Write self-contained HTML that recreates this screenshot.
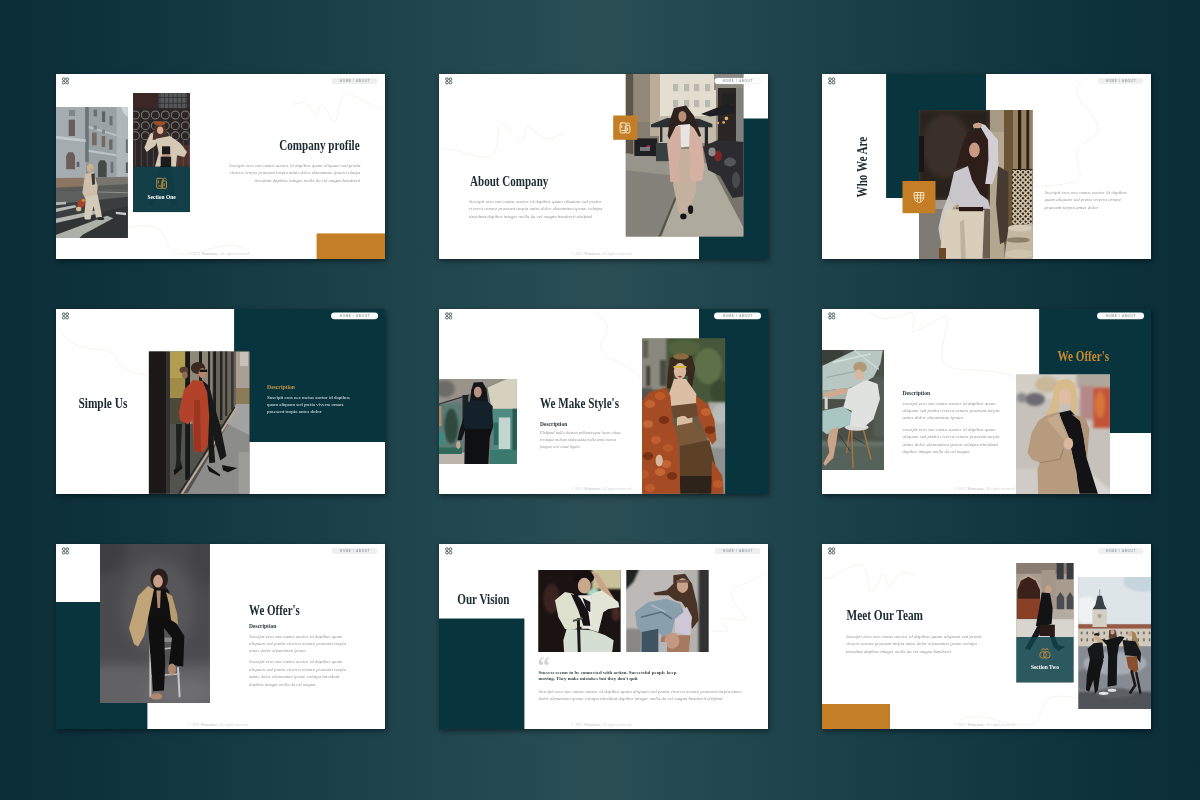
<!DOCTYPE html><html lang="en"><head><meta charset="utf-8"><title>Wonsnow – Company profile presentation</title><style>
html,body{margin:0;padding:0}
body{width:1200px;height:800px;overflow:hidden;position:relative;background:linear-gradient(90deg,#0b2d38 0%,#0e323c 8%,#193e47 25%,#23484f 40%,#2b4e55 50%,#21464d 62%,#163b44 78%,#0d313b 93%,#0b2d38 100%);font-family:"Liberation Serif",serif}
.slide{will-change:transform;position:absolute;width:329.0px;height:185.0px;box-shadow:1px 2px 5px rgba(0,10,14,.55);overflow:hidden;background:#fff}
.slide svg{display:block;width:100%;height:100%;font-family:"Liberation Serif",serif}
</style></head><body>
<svg width="0" height="0" style="position:absolute"><defs><filter id="z2" x="-30%" y="-30%" width="160%" height="160%" color-interpolation-filters="sRGB"><feGaussianBlur stdDeviation="2"/></filter><filter id="z3" x="-30%" y="-30%" width="160%" height="160%" color-interpolation-filters="sRGB"><feGaussianBlur stdDeviation="3"/></filter><filter id="z4" x="-30%" y="-30%" width="160%" height="160%" color-interpolation-filters="sRGB"><feGaussianBlur stdDeviation="4"/></filter><filter id="z6" x="-30%" y="-30%" width="160%" height="160%" color-interpolation-filters="sRGB"><feGaussianBlur stdDeviation="6"/></filter><filter id="z9" x="-30%" y="-30%" width="160%" height="160%" color-interpolation-filters="sRGB"><feGaussianBlur stdDeviation="9"/></filter><filter id="z14" x="-30%" y="-30%" width="160%" height="160%" color-interpolation-filters="sRGB"><feGaussianBlur stdDeviation="14"/></filter><filter id="z30" x="-30%" y="-30%" width="160%" height="160%" color-interpolation-filters="sRGB"><feGaussianBlur stdDeviation="30"/></filter></defs></svg>
<section class="slide" style="left:56px;top:74px"><svg viewBox="56 74 329 185" preserveAspectRatio="none"><rect x="56.0" y="74.0" width="329.0" height="185.0" fill="#fff" /><path d="M292.7 104.3 C294.4 104.0 300.2 102.3 302.7 102.3 C305.2 102.3 305.5 102.1 307.7 104.3 C309.9 106.5 314.1 114.6 316.0 115.2 C317.9 115.8 318.3 109.6 319.3 107.7 C320.3 105.8 320.7 103.6 321.8 103.9 C322.9 104.2 323.9 106.2 326.0 109.3 C328.1 112.4 332.4 121.6 334.3 122.3 C336.2 123.0 336.3 117.8 337.7 113.5 C339.1 109.2 341.0 100.0 342.7 96.8 C344.4 93.6 344.6 93.9 347.7 94.3 C350.8 94.7 356.7 97.3 361.0 99.3 C365.3 101.3 370.0 104.9 373.5 106.4 C377.0 107.9 380.4 107.8 381.8 108.1" fill="none" stroke="#f2eee5" stroke-width="0.7" stroke-linecap="round"/><path d="M128.1 227.5 C130.9 227.2 140.1 225.5 145.0 225.6 C149.9 225.7 154.4 226.3 157.5 228.1 C160.6 229.9 161.7 233.1 163.8 236.3 C165.9 239.5 167.7 244.6 170.0 247.5 C172.3 250.4 174.6 252.7 177.5 253.8 C180.4 255.0 182.5 255.1 187.5 254.4 C192.5 253.7 201.0 250.9 207.5 249.4 C214.0 247.9 221.1 246.1 226.3 245.6 C231.5 245.1 235.3 245.4 238.8 246.3 C242.3 247.2 245.5 249.9 247.5 251.3 C249.5 252.8 250.1 254.4 250.6 255.0" fill="none" stroke="#f2eee5" stroke-width="0.7" stroke-linecap="round"/><clipPath id="c1"><rect x="55.6" y="107.1" width="72.3" height="130.8"/></clipPath><g clip-path="url(#c1)"><rect x="54.6" y="106.1" width="74.3" height="132.8" fill="#8f949a"/><g transform="translate(50 106) scale(0.16667)"><g filter="url(#z3)"><rect x="30" y="0" width="186" height="440" fill="#a4acaf"/><rect x="230" y="0" width="172" height="440" fill="#99a2a5"/><rect x="400" y="0" width="70" height="440" fill="#adb6b8"/><rect x="211" y="0" width="22" height="335" fill="#6c7578"/><polygon points="425,0 470,0 470,70 440,40" fill="#cfd6d8"/><polygon points="30,178 214,200 214,216 30,196" fill="#c2c9cb"/><polygon points="232,120 400,170 400,182 232,134" fill="#b9c1c4"/><polygon points="232,262 400,290 400,302 232,276" fill="#bcc4c6"/><rect x="112" y="82" width="38" height="98" fill="#675f5b"/><rect x="114" y="24" width="36" height="36" fill="#7e8588"/><polygon points="97,300 110,278 138,278 150,300 150,380 97,380" fill="#6b5d57"/><rect x="262" y="22" width="20" height="40" fill="#697074"/><rect x="312" y="32" width="19" height="64" fill="#5c6366"/><rect x="357" y="60" width="18" height="56" fill="#687073"/><rect x="252" y="160" width="28" height="76" fill="#7a6963"/><rect x="310" y="180" width="21" height="66" fill="#786863"/><rect x="355" y="200" width="20" height="62" fill="#6e6967"/><rect x="262" y="116" width="19" height="26" fill="#7c8487"/><rect x="312" y="143" width="18" height="23" fill="#7c8487"/><polygon points="288,345 300,325 328,325 340,345 340,428 288,428" fill="#474948"/><rect x="364" y="335" width="16" height="67" fill="#6a7174"/><rect x="455" y="338" width="15" height="64" fill="#575e61"/><rect x="455" y="200" width="15" height="82" fill="#6d7477"/><rect x="160" y="335" width="16" height="30" fill="#59606a"/></g><g filter="url(#z3)"><polygon points="30,432 200,430 200,486 30,494" fill="#8b7661"/><polygon points="200,430 470,425 470,470 200,486" fill="#78756f"/><polygon points="30,490 470,468 470,497 30,518" fill="#5b5c58"/><polygon points="30,512 470,492 470,800 30,800" fill="#3a3e3e"/><polygon points="30,512 470,492 470,545 30,590" fill="#5c605f"/><polygon points="30,700 470,600 470,800 30,800" fill="#303434"/></g><g filter="url(#z3)"><polygon points="30,578 96,574 97,590 30,596" fill="#b4b7b1"/><polygon points="30,616 150,594 160,608 30,638" fill="#b7bab4"/><polygon points="30,676 292,622 310,640 30,704" fill="#b2b5af"/><polygon points="30,776 342,658 380,674 196,772 170,800 30,800" fill="#adb0a9"/><polygon points="395,634 456,640 456,655 395,648" fill="#c9ccc6"/><polyline points="292,516 470,521" fill="none" stroke="#8e918d" stroke-width="6" stroke-linecap="round" stroke-linejoin="round"/></g><g filter="url(#z3)"><ellipse cx="242" cy="372" rx="20" ry="25" fill="#c6b18c"/><ellipse cx="249" cy="384" rx="9" ry="11" fill="#c59f85"/><polygon points="210,410 262,394 286,480 282,542 214,560 194,520" fill="#cdbfa9"/><polygon points="248,408 268,404 270,470 254,474" fill="#3a3532"/><polygon points="214,545 285,530 300,600 312,666 276,670 262,600 246,666 204,668 211,600" fill="#d3cab8"/><ellipse cx="226" cy="673" rx="20" ry="8" fill="#d6d0c3"/><ellipse cx="304" cy="676" rx="22" ry="8" fill="#292927"/><ellipse cx="188" cy="584" rx="22" ry="30" fill="#a5442c" transform="rotate(30 188 584)"/><ellipse cx="172" cy="618" rx="16" ry="14" fill="#d2bd9a"/><ellipse cx="200" cy="566" rx="10" ry="10" fill="#c98a3a"/></g></g></g><clipPath id="c2"><rect x="133.2" y="93.0" width="56.8" height="119.1"/></clipPath><g clip-path="url(#c2)"><rect x="132.2" y="92.0" width="58.8" height="121.1" fill="#2b2324"/><g transform="translate(60 90) scale(0.16667)"><g filter="url(#z3)"><rect x="430" y="10" width="360" height="730" fill="#2b2324"/><rect x="430" y="10" width="162" height="102" fill="#3b2726"/><rect x="592" y="10" width="172" height="102" fill="#55575a"/><rect x="764" y="10" width="26" height="102" fill="#3a2a29"/><rect x="430" y="110" width="360" height="190" fill="#2c2524"/><circle cx="452" cy="150" r="24" fill="none" stroke="#7b7b7c" stroke-width="6"/><circle cx="452" cy="214" r="24" fill="none" stroke="#7b7b7c" stroke-width="6"/><circle cx="452" cy="274" r="24" fill="none" stroke="#7b7b7c" stroke-width="6"/><circle cx="512" cy="150" r="24" fill="none" stroke="#7b7b7c" stroke-width="6"/><circle cx="512" cy="214" r="24" fill="none" stroke="#7b7b7c" stroke-width="6"/><circle cx="512" cy="274" r="24" fill="none" stroke="#7b7b7c" stroke-width="6"/><circle cx="572" cy="150" r="24" fill="none" stroke="#7b7b7c" stroke-width="6"/><circle cx="572" cy="214" r="24" fill="none" stroke="#7b7b7c" stroke-width="6"/><circle cx="572" cy="274" r="24" fill="none" stroke="#7b7b7c" stroke-width="6"/><circle cx="632" cy="150" r="24" fill="none" stroke="#7b7b7c" stroke-width="6"/><circle cx="632" cy="214" r="24" fill="none" stroke="#7b7b7c" stroke-width="6"/><circle cx="632" cy="274" r="24" fill="none" stroke="#7b7b7c" stroke-width="6"/><circle cx="692" cy="150" r="24" fill="none" stroke="#7b7b7c" stroke-width="6"/><circle cx="692" cy="214" r="24" fill="none" stroke="#7b7b7c" stroke-width="6"/><circle cx="692" cy="274" r="24" fill="none" stroke="#7b7b7c" stroke-width="6"/><circle cx="752" cy="150" r="24" fill="none" stroke="#7b7b7c" stroke-width="6"/><circle cx="752" cy="214" r="24" fill="none" stroke="#7b7b7c" stroke-width="6"/><circle cx="752" cy="274" r="24" fill="none" stroke="#7b7b7c" stroke-width="6"/><rect x="430" y="300" width="360" height="160" fill="#2d2626"/><rect x="700" y="330" width="90" height="130" fill="#4f3029"/><polyline points="452,300 452,460" fill="none" stroke="#5d5959" stroke-width="4" stroke-linecap="round" stroke-linejoin="round"/><polyline points="488,300 488,460" fill="none" stroke="#5d5959" stroke-width="4" stroke-linecap="round" stroke-linejoin="round"/><polyline points="524,300 524,460" fill="none" stroke="#5d5959" stroke-width="4" stroke-linecap="round" stroke-linejoin="round"/><polyline points="560,300 560,460" fill="none" stroke="#5d5959" stroke-width="4" stroke-linecap="round" stroke-linejoin="round"/><polyline points="596,300 596,460" fill="none" stroke="#5d5959" stroke-width="4" stroke-linecap="round" stroke-linejoin="round"/><polyline points="632,300 632,460" fill="none" stroke="#5d5959" stroke-width="4" stroke-linecap="round" stroke-linejoin="round"/><polyline points="668,300 668,460" fill="none" stroke="#5d5959" stroke-width="4" stroke-linecap="round" stroke-linejoin="round"/><polyline points="704,300 704,460" fill="none" stroke="#5d5959" stroke-width="4" stroke-linecap="round" stroke-linejoin="round"/><polyline points="740,300 740,460" fill="none" stroke="#5d5959" stroke-width="4" stroke-linecap="round" stroke-linejoin="round"/><polyline points="776,300 776,460" fill="none" stroke="#5d5959" stroke-width="4" stroke-linecap="round" stroke-linejoin="round"/><polyline points="600,12 600,110" fill="none" stroke="#2c2a2a" stroke-width="4" stroke-linecap="round" stroke-linejoin="round"/><polyline points="626,12 626,110" fill="none" stroke="#2c2a2a" stroke-width="4" stroke-linecap="round" stroke-linejoin="round"/><polyline points="652,12 652,110" fill="none" stroke="#2c2a2a" stroke-width="4" stroke-linecap="round" stroke-linejoin="round"/><polyline points="678,12 678,110" fill="none" stroke="#2c2a2a" stroke-width="4" stroke-linecap="round" stroke-linejoin="round"/><polyline points="704,12 704,110" fill="none" stroke="#2c2a2a" stroke-width="4" stroke-linecap="round" stroke-linejoin="round"/><polyline points="730,12 730,110" fill="none" stroke="#2c2a2a" stroke-width="4" stroke-linecap="round" stroke-linejoin="round"/><polyline points="756,12 756,110" fill="none" stroke="#2c2a2a" stroke-width="4" stroke-linecap="round" stroke-linejoin="round"/><polyline points="592,45 764,45" fill="none" stroke="#2c2a2a" stroke-width="4" stroke-linecap="round" stroke-linejoin="round"/><polyline points="592,80 764,80" fill="none" stroke="#2c2a2a" stroke-width="4" stroke-linecap="round" stroke-linejoin="round"/></g><g filter="url(#z3)"><polygon points="568,214 632,212 652,330 622,342 600,282 584,342 558,330" fill="#4b3127"/><ellipse cx="598" cy="200" rx="33" ry="14" fill="#9b5026"/><ellipse cx="601" cy="242" rx="19" ry="23" fill="#d8ad91"/><polygon points="506,346 528,292 546,256 560,262 556,300 590,296 572,334 546,352 520,372" fill="#d6cab7"/><polygon points="575,292 660,276 722,320 762,372 746,402 702,392 696,460 570,460 592,380" fill="#d5c9b6"/><rect x="612" y="338" width="49" height="50" fill="#1b1919"/><rect x="612" y="386" width="49" height="16" fill="#c6997f"/><rect x="604" y="400" width="63" height="62" fill="#1c1b1c"/><polygon points="600,458 667,458 702,692 670,702 636,520 562,692 530,690" fill="#0a0a0a"/></g></g></g><rect x="133.2" y="166.7" width="56.8" height="45.4" fill="#0f434e" opacity="0.86"/><g fill="none" stroke="#c2913a" stroke-width="0.95" stroke-linejoin="round" stroke-linecap="round"><rect x="156.70" y="178.30" width="6" height="10" rx="1.1"/><rect x="161.80" y="180.90" width="4.7" height="7.4" rx="1.1"/><path d="M158.40 185.90 h2.6 M158.40 180.70 v2.4 M163.20 179.10 l1.5 -1 l1.5 1.2 M164.20 183.50 v2.2"/></g><text x="161.6" y="198.6" font-size="6" font-weight="bold" fill="#fff" text-anchor="middle" textLength="28" lengthAdjust="spacingAndGlyphs">Section One</text><rect x="316.6" y="233.4" width="68.4" height="25.6" fill="#c47e26" /><text x="279.3" y="150.0" font-size="13.6" font-weight="bold" fill="#1c2b31" textLength="80.3" lengthAdjust="spacingAndGlyphs">Company profile</text><text x="229.0" y="167.2" font-size="4.7" font-style="italic" font-weight="normal" fill="#939596" textLength="131.4" lengthAdjust="spacingAndGlyphs" opacity="1">Suscipit eros nec metus auctor id dapibus quam aliquam sed pretia</text><text x="229.6" y="174.4" font-size="4.7" font-style="italic" font-weight="normal" fill="#939596" textLength="130.8" lengthAdjust="spacingAndGlyphs" opacity="1">viverra ornare praesent turpia antes dolor elementum ipsum volutpa</text><text x="254.5" y="181.6" font-size="4.7" font-style="italic" font-weight="normal" fill="#939596" textLength="105.9" lengthAdjust="spacingAndGlyphs" opacity="1">tincidunt dapibus integer molla da vel magna hendrerit</text><circle cx="63.75" cy="79.15" r="1.35" fill="none" stroke="#2d4148" stroke-width="0.8"/><circle cx="67.25" cy="79.15" r="1.35" fill="none" stroke="#2d4148" stroke-width="0.8"/><circle cx="63.75" cy="82.65" r="1.35" fill="none" stroke="#2d4148" stroke-width="0.8"/><circle cx="67.25" cy="82.65" r="1.35" fill="none" stroke="#2d4148" stroke-width="0.8"/><rect x="331.6" y="78.0" width="45.9" height="6.0" rx="3.0" fill="#eef0f0" stroke="none" stroke-width="0.3"/><text x="354.6" y="82.0" font-size="3" font-weight="bold" font-family="'Liberation Sans',sans-serif" text-anchor="middle" textLength="29.6" lengthAdjust="spacing" fill="#98a2a4">HOME / ABOUT</text><text x="188.3" y="254.6" font-size="3.5" textLength="60.4" lengthAdjust="spacingAndGlyphs" fill="#cdd0d1" font-style="italic">© 2021 <tspan font-weight="bold" font-style="normal">Wonsnow.</tspan> All rights reserved</text></svg></section>
<section class="slide" style="left:439px;top:74px"><svg viewBox="439 74 329 185" preserveAspectRatio="none"><rect x="439.0" y="74.0" width="329.0" height="185.0" fill="#fff" /><path d="M442.0 149.0 C444.0 149.1 449.5 148.9 454.0 149.8 C458.5 150.7 463.5 153.1 469.0 154.3 C474.5 155.6 482.8 157.4 487.0 157.3 C491.2 157.2 492.8 156.4 494.5 153.5 C496.2 150.6 496.8 144.5 497.5 140.0 C498.2 135.5 498.1 129.1 499.0 126.5 C499.9 123.9 500.8 123.5 502.8 124.3 C504.8 125.0 507.9 128.1 511.0 131.0 C514.1 133.9 519.2 140.5 521.5 141.5 C523.8 142.5 523.6 139.4 524.5 137.0 C525.4 134.6 525.5 128.6 526.8 127.3 C528.0 126.0 529.6 128.0 532.0 129.5 C534.4 131.0 538.0 134.8 541.0 136.3 C544.0 137.8 546.2 138.9 550.0 138.5 C553.8 138.1 561.2 134.8 563.5 134.0" fill="none" stroke="#f2eee5" stroke-width="0.7" stroke-linecap="round"/><rect x="699.0" y="118.5" width="69.0" height="140.5" fill="#08343e" /><clipPath id="c3"><rect x="625.8" y="74.1" width="117.6" height="162.3"/></clipPath><g clip-path="url(#c3)"><rect x="624.8" y="73.1" width="119.6" height="164.3" fill="#8c8577"/><g transform="translate(590 76) scale(0.20000)"><g filter="url(#z3)"><rect x="170" y="-15" width="180" height="405" fill="#928878"/><rect x="170" y="-15" width="46" height="405" fill="#5d554b"/><rect x="216" y="230" width="134" height="160" fill="#857d71"/><rect x="345" y="-15" width="285" height="350" fill="#e3ddd0"/><rect x="300" y="-15" width="50" height="315" fill="#b9ad9a"/><rect x="415" y="40" width="26" height="36" fill="#bab9b1"/><rect x="470" y="40" width="26" height="36" fill="#bab9b1"/><rect x="520" y="40" width="26" height="36" fill="#bab9b1"/><rect x="575" y="40" width="26" height="36" fill="#bab9b1"/><rect x="415" y="120" width="26" height="36" fill="#bab9b1"/><rect x="470" y="120" width="26" height="36" fill="#bab9b1"/><rect x="520" y="120" width="26" height="36" fill="#bab9b1"/><rect x="575" y="120" width="26" height="36" fill="#bab9b1"/><rect x="345" y="200" width="285" height="135" fill="#c2baab"/><rect x="620" y="-15" width="155" height="85" fill="#8f8b85"/><rect x="640" y="60" width="100" height="275" fill="#2b2623"/><rect x="730" y="60" width="45" height="560" fill="#80817f"/><rect x="660" y="85" width="66" height="57" fill="#242324"/><polygon points="555,190 682,140 722,150 722,186 600,202" fill="#1e1f22"/><ellipse cx="682" cy="212" rx="9" ry="9" fill="#e8b273"/><ellipse cx="668" cy="232" rx="7" ry="7" fill="#d9a366"/><ellipse cx="640" cy="235" rx="6" ry="6" fill="#d9a366"/><polygon points="305,242 385,210 545,214 612,240 612,256 305,256" fill="#2a3032"/><rect x="574" y="255" width="16" height="97" fill="#222426"/><rect x="350" y="255" width="12" height="75" fill="#2a2c2d"/></g><g filter="url(#z3)"><polygon points="170,385 445,420 422,620 340,810 170,810" fill="#84827a"/><polygon points="170,385 445,420 438,500 170,470" fill="#97958b"/><polygon points="440,420 602,440 775,770 775,810 358,810 422,620" fill="#aeaa9e"/><polygon points="600,440 775,520 775,770" fill="#76746a"/><polyline points="432,600 345,810" fill="none" stroke="#54544b" stroke-width="10" stroke-linecap="round" stroke-linejoin="round"/><rect x="222" y="312" width="114" height="88" fill="#1d1f23"/><ellipse cx="292" cy="352" rx="10" ry="6" fill="#a33"/><rect x="250" y="355" width="50" height="20" fill="#cfcfcf" opacity="0.5"/><rect x="330" y="335" width="66" height="91" fill="#394040"/><polygon points="565,352 640,320 775,330 775,600 712,610 650,500 590,470" fill="#2b2b30"/><ellipse cx="640" cy="400" rx="20" ry="26" fill="#7c2626"/><ellipse cx="700" cy="430" rx="30" ry="22" fill="#55555c"/><ellipse cx="610" cy="380" rx="18" ry="22" fill="#8a8a88"/><ellipse cx="730" cy="520" rx="20" ry="40" fill="#4a4a4e"/></g><g filter="url(#z2)"><polygon points="420,160 480,148 520,200 556,300 520,312 500,240 430,250 400,322 388,300 400,220" fill="#2d211d"/><ellipse cx="462" cy="202" rx="20" ry="27" fill="#b88e77"/><polygon points="440,245 500,240 505,352 445,357" fill="#e8e4e0"/><polygon points="415,540 440,365 500,365 530,530 530,582 502,652 480,652 490,560 482,682 445,692" fill="#c3b19d"/><polygon points="385,340 430,250 452,248 455,362 445,440 450,526 402,530 395,440" fill="#d4aea1"/><polygon points="500,245 520,260 560,330 572,440 560,522 502,532 495,372" fill="#d6b0a3"/><ellipse cx="503" cy="668" rx="13" ry="22" fill="#141414"/><ellipse cx="467" cy="702" rx="16" ry="14" fill="#141414"/></g></g></g><rect x="613.2" y="115.5" width="24.1" height="24.3" fill="#c47e26" /><g fill="none" stroke="#f8ead0" stroke-width="1.0" stroke-linejoin="round" stroke-linecap="round"><rect x="620.10" y="122.90" width="6" height="10" rx="1.1"/><rect x="625.20" y="125.50" width="4.7" height="7.4" rx="1.1"/><path d="M621.80 130.50 h2.6 M621.80 125.30 v2.4 M626.60 123.70 l1.5 -1 l1.5 1.2 M627.60 128.10 v2.2"/></g><text x="470.1" y="186.0" font-size="13.6" font-weight="bold" fill="#1c2b31" textLength="78.2" lengthAdjust="spacingAndGlyphs">About Company</text><text x="468.9" y="202.6" font-size="4.7" font-style="italic" font-weight="normal" fill="#939596" textLength="132.0" lengthAdjust="spacingAndGlyphs" opacity="1">Suscipit eros nec metus auctor id dapibus quam aliquam sed pretia</text><text x="468.9" y="210.1" font-size="4.7" font-style="italic" font-weight="normal" fill="#939596" textLength="133.5" lengthAdjust="spacingAndGlyphs" opacity="1">viverra ornare praesent turpia antes dolor elementum ipsum volutpa</text><text x="468.9" y="217.6" font-size="4.7" font-style="italic" font-weight="normal" fill="#939596" textLength="123.1" lengthAdjust="spacingAndGlyphs" opacity="1">tincidunt dapibus integer molla da vel magna hendrerit eleifend</text><circle cx="446.95" cy="79.15" r="1.35" fill="none" stroke="#2d4148" stroke-width="0.8"/><circle cx="450.45" cy="79.15" r="1.35" fill="none" stroke="#2d4148" stroke-width="0.8"/><circle cx="446.95" cy="82.65" r="1.35" fill="none" stroke="#2d4148" stroke-width="0.8"/><circle cx="450.45" cy="82.65" r="1.35" fill="none" stroke="#2d4148" stroke-width="0.8"/><rect x="714.6" y="78.0" width="45.9" height="6.0" rx="3.0" fill="#fbfcfc" stroke="#d5d9da" stroke-width="0.3"/><text x="737.5" y="82.0" font-size="3" font-weight="bold" font-family="'Liberation Sans',sans-serif" text-anchor="middle" textLength="29.6" lengthAdjust="spacing" fill="#98a2a4">HOME / ABOUT</text><text x="571.0" y="254.9" font-size="3.5" textLength="60.4" lengthAdjust="spacingAndGlyphs" fill="#cdd0d1" font-style="italic">© 2021 <tspan font-weight="bold" font-style="normal">Wonsnow.</tspan> All rights reserved</text></svg></section>
<section class="slide" style="left:822px;top:74px"><svg viewBox="822 74 329 185" preserveAspectRatio="none"><rect x="822.0" y="74.0" width="329.0" height="185.0" fill="#fff" /><path d="M1090.2 75.6 C1088.6 76.7 1082.6 79.4 1080.4 82.1 C1078.2 84.8 1076.9 88.4 1077.2 91.9 C1077.5 95.4 1079.6 99.5 1082.0 103.3 C1084.4 107.1 1089.1 110.6 1091.8 114.7 C1094.5 118.8 1097.8 124.2 1098.3 127.7 C1098.8 131.2 1097.4 133.1 1095.0 135.8 C1092.6 138.5 1086.8 141.2 1083.7 143.9 C1080.6 146.6 1077.2 148.5 1076.3 152.0 C1075.3 155.5 1077.3 161.3 1078.0 165.1 C1078.7 168.9 1080.8 172.1 1080.4 174.8 C1080.0 177.5 1079.8 179.5 1075.5 181.3 C1071.2 183.1 1061.2 184.6 1054.4 185.4 C1047.6 186.2 1038.2 186.1 1034.9 186.2" fill="none" stroke="#f2eee5" stroke-width="0.7" stroke-linecap="round"/><rect x="886.1" y="74.0" width="99.9" height="124.0" fill="#08343e" /><clipPath id="c4"><rect x="919.1" y="110.1" width="113.4" height="148.6"/></clipPath><g clip-path="url(#c4)"><rect x="918.1" y="109.1" width="115.4" height="150.6" fill="#6b5f52"/><g transform="translate(860 100) scale(0.20000)"><g filter="url(#z14)"><rect x="285" y="40" width="370" height="465" fill="#29221c"/><ellipse cx="430" cy="230" rx="120" ry="160" fill="#3a3029"/></g><g filter="url(#z3)"><rect x="285" y="180" width="35" height="180" fill="#1a1512"/><polygon points="285,500 480,500 480,805 285,805" fill="#7e7973"/><rect x="285" y="500" width="195" height="45" fill="#9f9991"/><rect x="650" y="40" width="72" height="765" fill="#b4a78f"/><rect x="650" y="40" width="72" height="120" fill="#a69a84"/><rect x="720" y="40" width="48" height="680" fill="#6c5537"/><polygon points="690,330 742,360 742,700 700,720 680,520" fill="#463b30"/><rect x="765" y="40" width="105" height="305" fill="#97805f"/><rect x="790" y="40" width="16" height="305" fill="#261e16"/><rect x="832" y="40" width="14" height="305" fill="#2a2118"/><rect x="760" y="345" width="110" height="277" fill="#2b2219"/></g><g filter="url(#z2)"><clipPath id="lat4"><rect x="762" y="350" width="110" height="272"/></clipPath><g clip-path="url(#lat4)"><polyline points="448,345 725,622" fill="none" stroke="#cdc0a6" stroke-width="8" stroke-linecap="round" stroke-linejoin="round"/><polyline points="1182,345 905,622" fill="none" stroke="#cdc0a6" stroke-width="8" stroke-linecap="round" stroke-linejoin="round"/><polyline points="474,345 751,622" fill="none" stroke="#cdc0a6" stroke-width="8" stroke-linecap="round" stroke-linejoin="round"/><polyline points="1156,345 879,622" fill="none" stroke="#cdc0a6" stroke-width="8" stroke-linecap="round" stroke-linejoin="round"/><polyline points="500,345 777,622" fill="none" stroke="#cdc0a6" stroke-width="8" stroke-linecap="round" stroke-linejoin="round"/><polyline points="1130,345 853,622" fill="none" stroke="#cdc0a6" stroke-width="8" stroke-linecap="round" stroke-linejoin="round"/><polyline points="526,345 803,622" fill="none" stroke="#cdc0a6" stroke-width="8" stroke-linecap="round" stroke-linejoin="round"/><polyline points="1104,345 827,622" fill="none" stroke="#cdc0a6" stroke-width="8" stroke-linecap="round" stroke-linejoin="round"/><polyline points="552,345 829,622" fill="none" stroke="#cdc0a6" stroke-width="8" stroke-linecap="round" stroke-linejoin="round"/><polyline points="1078,345 801,622" fill="none" stroke="#cdc0a6" stroke-width="8" stroke-linecap="round" stroke-linejoin="round"/><polyline points="578,345 855,622" fill="none" stroke="#cdc0a6" stroke-width="8" stroke-linecap="round" stroke-linejoin="round"/><polyline points="1052,345 775,622" fill="none" stroke="#cdc0a6" stroke-width="8" stroke-linecap="round" stroke-linejoin="round"/><polyline points="604,345 881,622" fill="none" stroke="#cdc0a6" stroke-width="8" stroke-linecap="round" stroke-linejoin="round"/><polyline points="1026,345 749,622" fill="none" stroke="#cdc0a6" stroke-width="8" stroke-linecap="round" stroke-linejoin="round"/><polyline points="630,345 907,622" fill="none" stroke="#cdc0a6" stroke-width="8" stroke-linecap="round" stroke-linejoin="round"/><polyline points="1000,345 723,622" fill="none" stroke="#cdc0a6" stroke-width="8" stroke-linecap="round" stroke-linejoin="round"/><polyline points="656,345 933,622" fill="none" stroke="#cdc0a6" stroke-width="8" stroke-linecap="round" stroke-linejoin="round"/><polyline points="974,345 697,622" fill="none" stroke="#cdc0a6" stroke-width="8" stroke-linecap="round" stroke-linejoin="round"/><polyline points="682,345 959,622" fill="none" stroke="#cdc0a6" stroke-width="8" stroke-linecap="round" stroke-linejoin="round"/><polyline points="948,345 671,622" fill="none" stroke="#cdc0a6" stroke-width="8" stroke-linecap="round" stroke-linejoin="round"/><polyline points="708,345 985,622" fill="none" stroke="#cdc0a6" stroke-width="8" stroke-linecap="round" stroke-linejoin="round"/><polyline points="922,345 645,622" fill="none" stroke="#cdc0a6" stroke-width="8" stroke-linecap="round" stroke-linejoin="round"/><polyline points="734,345 1011,622" fill="none" stroke="#cdc0a6" stroke-width="8" stroke-linecap="round" stroke-linejoin="round"/><polyline points="896,345 619,622" fill="none" stroke="#cdc0a6" stroke-width="8" stroke-linecap="round" stroke-linejoin="round"/><polyline points="760,345 1037,622" fill="none" stroke="#cdc0a6" stroke-width="8" stroke-linecap="round" stroke-linejoin="round"/><polyline points="870,345 593,622" fill="none" stroke="#cdc0a6" stroke-width="8" stroke-linecap="round" stroke-linejoin="round"/><polyline points="786,345 1063,622" fill="none" stroke="#cdc0a6" stroke-width="8" stroke-linecap="round" stroke-linejoin="round"/><polyline points="844,345 567,622" fill="none" stroke="#cdc0a6" stroke-width="8" stroke-linecap="round" stroke-linejoin="round"/><polyline points="812,345 1089,622" fill="none" stroke="#cdc0a6" stroke-width="8" stroke-linecap="round" stroke-linejoin="round"/><polyline points="818,345 541,622" fill="none" stroke="#cdc0a6" stroke-width="8" stroke-linecap="round" stroke-linejoin="round"/><polyline points="838,345 1115,622" fill="none" stroke="#cdc0a6" stroke-width="8" stroke-linecap="round" stroke-linejoin="round"/><polyline points="792,345 515,622" fill="none" stroke="#cdc0a6" stroke-width="8" stroke-linecap="round" stroke-linejoin="round"/><polyline points="864,345 1141,622" fill="none" stroke="#cdc0a6" stroke-width="8" stroke-linecap="round" stroke-linejoin="round"/><polyline points="766,345 489,622" fill="none" stroke="#cdc0a6" stroke-width="8" stroke-linecap="round" stroke-linejoin="round"/><polyline points="890,345 1167,622" fill="none" stroke="#cdc0a6" stroke-width="8" stroke-linecap="round" stroke-linejoin="round"/><polyline points="740,345 463,622" fill="none" stroke="#cdc0a6" stroke-width="8" stroke-linecap="round" stroke-linejoin="round"/></g></g><g filter="url(#z3)"><polygon points="742,640 870,615 870,805 720,805" fill="#c4b8a2"/><ellipse cx="800" cy="640" rx="60" ry="18" fill="#d6cbb6"/><ellipse cx="790" cy="700" rx="60" ry="14" fill="#8d816d"/><ellipse cx="800" cy="770" rx="75" ry="22" fill="#cfc4ae"/></g><g filter="url(#z2)"><polygon points="540,160 600,150 642,200 652,300 642,420 632,502 590,470 560,400 520,332 480,342 500,260 520,200" fill="#2d1e19"/><polygon points="445,470 470,530 430,600 402,705 392,640 410,560" fill="#cfc9c8"/><polygon points="470,360 540,330 580,420 640,500 652,545 470,535 445,470" fill="#c9c6cc"/><polygon points="600,130 570,142 565,125 590,112 626,125 690,200 692,330 662,420 626,420 642,300 640,200" fill="#d2ced3"/><ellipse cx="572" cy="250" rx="27" ry="37" fill="#c89983"/><ellipse cx="588" cy="128" rx="22" ry="13" fill="#c9a08a"/><polygon points="430,545 622,550 612,805 400,805 410,620" fill="#d8ceba"/><polygon points="500,610 520,600 530,805 505,805" fill="#bdb29d"/><rect x="495" y="535" width="121" height="21" fill="#291915"/><ellipse cx="486" cy="530" rx="10" ry="8" fill="#b89b6a"/><rect x="395" y="740" width="35" height="65" fill="#6a4929"/><polygon points="540,330 600,380 640,500 600,470 560,400" fill="#2d1e19"/></g></g></g><rect x="902.5" y="181.0" width="33.0" height="32.2" fill="#c47e26" /><g fill="none" stroke="#f8e6c4" stroke-width="0.95" stroke-linejoin="round"><path d="M914.20 192.50 h9.6 v4.6 c0 3.2 -2.4 4.7 -4.8 5.6 c-2.4 -0.9 -4.8 -2.4 -4.8 -5.6 z"/><path d="M914.20 195.20 h9.6 M914.40 198.00 h9.2 M917.40 192.50 v9 M920.60 192.50 v9"/></g><text transform="translate(866.9 197.4) rotate(-90)" font-size="13.6" font-weight="bold" fill="#1c2b31" textLength="60.6" lengthAdjust="spacingAndGlyphs">Who We Are</text><text x="1044.5" y="194.1" font-size="4.7" font-style="italic" font-weight="normal" fill="#939596" textLength="82.5" lengthAdjust="spacingAndGlyphs" opacity="1">Suscipit eros nec metus auctor id dapibus</text><text x="1044.5" y="201.3" font-size="4.7" font-style="italic" font-weight="normal" fill="#939596" textLength="76.5" lengthAdjust="spacingAndGlyphs" opacity="1">quam aliquam sed pretia viverra ornare</text><text x="1044.5" y="208.6" font-size="4.7" font-style="italic" font-weight="normal" fill="#939596" textLength="54.0" lengthAdjust="spacingAndGlyphs" opacity="1">praesent turpia antes dolor</text><circle cx="829.95" cy="79.15" r="1.35" fill="none" stroke="#2d4148" stroke-width="0.8"/><circle cx="833.45" cy="79.15" r="1.35" fill="none" stroke="#2d4148" stroke-width="0.8"/><circle cx="829.95" cy="82.65" r="1.35" fill="none" stroke="#2d4148" stroke-width="0.8"/><circle cx="833.45" cy="82.65" r="1.35" fill="none" stroke="#2d4148" stroke-width="0.8"/><rect x="1097.6" y="78.0" width="45.9" height="6.0" rx="3.0" fill="#eef0f0" stroke="none" stroke-width="0.3"/><text x="1120.5" y="82.0" font-size="3" font-weight="bold" font-family="'Liberation Sans',sans-serif" text-anchor="middle" textLength="29.6" lengthAdjust="spacing" fill="#98a2a4">HOME / ABOUT</text></svg></section>
<section class="slide" style="left:56px;top:309px"><svg viewBox="56 309 329 185" preserveAspectRatio="none"><rect x="56.0" y="309.0" width="329.0" height="185.0" fill="#fff" /><path d="M58.0 327.0 C59.0 328.5 61.3 333.2 64.0 336.0 C66.7 338.8 70.0 342.0 74.0 344.0 C78.0 346.0 83.0 347.0 88.0 348.0 C93.0 349.0 100.0 349.2 104.0 350.0 C108.0 350.8 109.8 351.3 112.0 353.0 C114.2 354.7 115.3 357.7 117.0 360.0 C118.7 362.3 119.5 365.0 122.0 367.0 C124.5 369.0 127.8 370.5 132.0 372.0 C136.2 373.5 144.5 375.3 147.0 376.0" fill="none" stroke="#f2eee5" stroke-width="0.7" stroke-linecap="round"/><rect x="234.1" y="309.0" width="150.9" height="133.0" fill="#08343e" /><clipPath id="c5"><rect x="148.9" y="351.4" width="100.5" height="142.3"/></clipPath><g clip-path="url(#c5)"><rect x="147.9" y="350.4" width="102.5" height="144.3" fill="#55524d"/><g transform="translate(100 340) scale(0.20000)"><g filter="url(#z3)"><rect x="240" y="50" width="112" height="730" fill="#1b1918"/><rect x="330" y="50" width="22" height="730" fill="#353331"/><rect x="350" y="50" width="340" height="380" fill="#8f8876"/><rect x="350" y="50" width="90" height="250" fill="#a08c47"/><rect x="350" y="50" width="80" height="140" fill="#b39d50"/><rect x="350" y="290" width="80" height="140" fill="#4a4a3a"/><rect x="560" y="50" width="130" height="380" fill="#696457"/><rect x="680" y="50" width="75" height="280" fill="#ab9f93"/><rect x="680" y="240" width="75" height="90" fill="#8b7b56"/><rect x="700" y="60" width="40" height="70" fill="#c9c0b8"/><polygon points="680,320 755,320 755,780 430,780 640,420" fill="#8c8c8a"/><polygon points="680,320 755,320 755,480 640,420" fill="#a3a3a1"/><rect x="692" y="560" width="63" height="220" fill="#9b9b99"/><polygon points="350,420 640,420 400,780 350,780" fill="#53534d"/></g><g filter="url(#z2)"><rect x="426" y="50" width="24" height="650" fill="#17181a"/><rect x="495" y="50" width="15" height="510" fill="#1d1e20"/><rect x="540" y="50" width="11" height="280" fill="#222"/><rect x="566" y="50" width="14" height="370" fill="#1c1c1e"/><rect x="600" y="50" width="12" height="350" fill="#222"/><rect x="626" y="50" width="10" height="330" fill="#2a2a2a"/><rect x="655" y="60" width="13" height="290" fill="#333"/><polyline points="684,338 402,780" fill="none" stroke="#b6ac99" stroke-width="10" stroke-linecap="round" stroke-linejoin="round"/><polyline points="672,338 388,780" fill="none" stroke="#2a2826" stroke-width="7" stroke-linecap="round" stroke-linejoin="round"/></g><g filter="url(#z2)"><ellipse cx="420" cy="150" rx="22" ry="16" fill="#5a4030"/><ellipse cx="425" cy="175" rx="14" ry="18" fill="#8a6a50"/><polygon points="380,420 410,420 402,600 412,640 372,672 382,600" fill="#1f1f20"/><polygon points="368,650 412,628 410,642 372,676" fill="#151515"/><ellipse cx="490" cy="140" rx="36" ry="30" fill="#38281f"/><ellipse cx="512" cy="166" rx="19" ry="25" fill="#b4856a"/><rect x="498" y="148" width="38" height="12" fill="#141414"/><polygon points="510,200 546,230 572,330 602,430 632,580 602,602 566,480 576,612 546,616 536,420" fill="#191818"/><polygon points="465,200 512,205 536,260 546,380 540,520 520,560 470,556 462,400 440,422 400,402 394,360 420,250" fill="#b3422a"/><polygon points="470,300 500,300 505,556 470,556" fill="#9c3520"/><polygon points="535,625 600,672 600,683 545,656" fill="#131313"/><polygon points="610,625 686,640 640,661 615,651" fill="#131313"/></g></g></g><text x="78.4" y="408.1" font-size="13.6" font-weight="bold" fill="#1c2b31" textLength="49.0" lengthAdjust="spacingAndGlyphs">Simple Us</text><text x="267.1" y="388.9" font-size="5.1" font-style="normal" font-weight="bold" fill="#c4964a" textLength="27.9" lengthAdjust="spacingAndGlyphs" opacity="1">Description</text><text x="267.1" y="398.9" font-size="4.8" font-style="normal" font-weight="normal" fill="#e8eeee" textLength="82.5" lengthAdjust="spacingAndGlyphs" opacity="1">Suscipit eros nec metus auctor id dapibus</text><text x="267.1" y="406.1" font-size="4.8" font-style="normal" font-weight="normal" fill="#e8eeee" textLength="76.9" lengthAdjust="spacingAndGlyphs" opacity="1">quam aliquam sed pretia viverra ornare</text><text x="267.1" y="413.3" font-size="4.8" font-style="normal" font-weight="normal" fill="#e8eeee" textLength="54.3" lengthAdjust="spacingAndGlyphs" opacity="1">praesent turpia antes dolor</text><circle cx="63.75" cy="314.15" r="1.35" fill="none" stroke="#2d4148" stroke-width="0.8"/><circle cx="67.25" cy="314.15" r="1.35" fill="none" stroke="#2d4148" stroke-width="0.8"/><circle cx="63.75" cy="317.65" r="1.35" fill="none" stroke="#2d4148" stroke-width="0.8"/><circle cx="67.25" cy="317.65" r="1.35" fill="none" stroke="#2d4148" stroke-width="0.8"/><rect x="331.0" y="312.4" width="47.1" height="6.9" rx="3.5" fill="#fafbfb" stroke="none" stroke-width="0.3"/><text x="354.6" y="316.9" font-size="3" font-weight="bold" font-family="'Liberation Sans',sans-serif" text-anchor="middle" textLength="29.6" lengthAdjust="spacing" fill="#98a2a4">HOME / ABOUT</text></svg></section>
<section class="slide" style="left:439px;top:309px"><svg viewBox="439 309 329 185" preserveAspectRatio="none"><rect x="439.0" y="309.0" width="329.0" height="185.0" fill="#fff" /><path d="M596.0 312.0 C597.2 313.2 601.2 316.5 603.0 319.0 C604.8 321.5 606.7 324.2 607.0 327.0 C607.3 329.8 606.0 333.2 605.0 336.0 C604.0 338.8 601.6 341.5 601.0 344.0 C600.4 346.5 600.0 348.7 601.5 351.0 C603.0 353.3 606.1 355.5 610.0 358.0 C613.9 360.5 620.7 363.5 625.0 366.0 C629.3 368.5 633.5 371.0 636.0 373.0 C638.5 375.0 639.3 377.2 640.0 378.0" fill="none" stroke="#f2eee5" stroke-width="0.7" stroke-linecap="round"/><rect x="699.0" y="309.0" width="69.0" height="185.0" fill="#08343e" /><clipPath id="c6"><rect x="642.0" y="338.5" width="83.1" height="155.2"/></clipPath><g clip-path="url(#c6)"><rect x="641.0" y="337.5" width="85.1" height="157.2" fill="#6b5b45"/><g transform="translate(600 336) scale(0.20000)"><g filter="url(#z4)"><rect x="200" y="0" width="440" height="340" fill="#47583a"/><ellipse cx="540" cy="150" rx="70" ry="90" fill="#5e7048"/><ellipse cx="420" cy="60" rx="80" ry="40" fill="#52633d"/><ellipse cx="600" cy="280" rx="50" ry="60" fill="#3a4a2f"/><rect x="200" y="0" width="132" height="270" fill="#8a897f"/><rect x="232" y="150" width="18" height="100" fill="#3a3a33"/><rect x="300" y="120" width="30" height="130" fill="#4a4a42"/><rect x="215" y="20" width="25" height="90" fill="#5d5d55"/><rect x="200" y="260" width="60" height="160" fill="#55564f"/><rect x="540" y="330" width="100" height="320" fill="#a7a9a4"/><rect x="540" y="560" width="100" height="240" fill="#8d918f"/><ellipse cx="600" cy="390" rx="40" ry="50" fill="#b9bbb6"/></g><g filter="url(#z3)"><polygon points="350,110 400,88 460,100 476,160 460,262 430,272 440,200 370,190 360,262 334,262 340,170" fill="#39291f"/><ellipse cx="405" cy="102" rx="40" ry="16" fill="#8a6a40"/><ellipse cx="400" cy="176" rx="31" ry="41" fill="#d8b79f"/><rect x="368" y="150" width="64" height="10" fill="#d6b63a"/><ellipse cx="400" cy="203" rx="9" ry="4" fill="#9a2a2a"/><polygon points="370,215 430,215 482,290 482,352 350,352 345,290" fill="#dbbfa5"/><rect x="385" y="400" width="77" height="55" fill="#d8bda3"/><polygon points="352,350 482,335 492,400 440,412 420,396 370,412" fill="#694930"/><polygon points="375,450 472,430 522,500 542,542 400,562" fill="#79593a"/><polygon points="400,550 546,520 576,640 562,702 400,722" fill="#5d4127"/><rect x="400" y="700" width="162" height="100" fill="#2d231b"/><polygon points="205,330 250,280 332,258 352,300 362,420 392,520 402,800 205,800" fill="#a64c24"/><polygon points="480,300 540,340 572,420 582,520 562,542 520,480 490,400" fill="#a64c24"/><polygon points="560,620 612,700 618,800 556,800" fill="#a64c24"/><ellipse cx="250" cy="340" rx="26" ry="20" fill="#c26230"/><ellipse cx="300" cy="300" rx="26" ry="20" fill="#bd5c2a"/><ellipse cx="240" cy="440" rx="26" ry="20" fill="#c46634"/><ellipse cx="320" cy="420" rx="26" ry="20" fill="#7a3216"/><ellipse cx="280" cy="520" rx="26" ry="20" fill="#bf5f2d"/><ellipse cx="340" cy="560" rx="26" ry="20" fill="#b85828"/><ellipse cx="240" cy="600" rx="26" ry="20" fill="#7a3216"/><ellipse cx="300" cy="680" rx="26" ry="20" fill="#c46634"/><ellipse cx="360" cy="700" rx="26" ry="20" fill="#7a3216"/><ellipse cx="250" cy="760" rx="26" ry="20" fill="#bd5c2a"/><ellipse cx="530" cy="380" rx="26" ry="20" fill="#c26230"/><ellipse cx="550" cy="470" rx="26" ry="20" fill="#7a3216"/><ellipse cx="590" cy="740" rx="26" ry="20" fill="#bd5c2a"/><ellipse cx="330" cy="640" rx="26" ry="20" fill="#c46634"/><ellipse cx="220" cy="690" rx="26" ry="20" fill="#b85828"/><ellipse cx="296" cy="622" rx="18" ry="30" fill="#d8b79f"/></g></g></g><clipPath id="c7"><rect x="438.6" y="379.0" width="78.3" height="84.9"/></clipPath><g clip-path="url(#c7)"><rect x="437.6" y="378.0" width="80.3" height="86.9" fill="#6f7a78"/><g transform="translate(420 370) scale(0.12500)"><g filter="url(#z4)"><g filter="url(#z14)"><polygon points="100,20 725,20 725,60 400,200 100,290" fill="#9a938a"/><ellipse cx="200" cy="150" rx="80" ry="70" fill="#6e6b67"/></g><polygon points="725,60 400,200 140,272 140,300 740,300 740,60" fill="#9a938a" opacity="0"/><polygon points="720,60 790,60 790,312 580,342 540,140" fill="#d6d1bf"/><rect x="140" y="270" width="205" height="380" fill="#5b7b73"/><g filter="url(#z9)"><ellipse cx="250" cy="450" rx="55" ry="140" fill="#30493f"/></g><rect x="140" y="290" width="32" height="160" fill="#b48a6a"/><rect x="140" y="500" width="60" height="100" fill="#3f8a7c"/><rect x="580" y="310" width="210" height="450" fill="#4f8a80"/><rect x="630" y="380" width="92" height="252" fill="#c4d4ce"/><rect x="740" y="310" width="50" height="450" fill="#2b5a55"/><rect x="560" y="640" width="230" height="120" fill="#3a7a6e"/><rect x="590" y="420" width="35" height="180" fill="#2a6a62"/><rect x="140" y="660" width="225" height="100" fill="#bcb5ac"/><rect x="140" y="620" width="195" height="52" fill="#2f6a5c"/><polyline points="140,276 392,200" fill="none" stroke="#292929" stroke-width="9" stroke-linecap="round" stroke-linejoin="round"/><rect x="340" y="200" width="46" height="282" fill="#1c2325"/></g><g filter="url(#z3)"><polygon points="430,100 500,95 532,150 546,262 420,272 400,250 410,160" fill="#141619"/><ellipse cx="462" cy="176" rx="31" ry="44" fill="#b79383"/><polygon points="350,380 362,476 332,562 300,560 320,470" fill="#111315"/><polygon points="575,330 586,450 556,542 530,540 560,460" fill="#111315"/><polygon points="360,270 420,240 540,250 582,290 576,472 360,476 350,380" fill="#14212a"/><ellipse cx="306" cy="600" rx="17" ry="30" fill="#c8a48f"/><ellipse cx="526" cy="582" rx="29" ry="27" fill="#c8a48f"/><polygon points="360,470 562,470 546,760 355,760" fill="#0e1012"/></g></g></g><text x="540.0" y="408.1" font-size="13.6" font-weight="bold" fill="#1c2b31" textLength="79.0" lengthAdjust="spacingAndGlyphs">We Make Style's</text><text x="540.0" y="426.2" font-size="5.1" font-style="normal" font-weight="bold" fill="#2a373c" textLength="27.2" lengthAdjust="spacingAndGlyphs" opacity="1">Description</text><text x="540.0" y="434.4" font-size="4.7" font-style="italic" font-weight="normal" fill="#939596" textLength="80.4" lengthAdjust="spacingAndGlyphs" opacity="1">Eleifend nulla dictum pellentesque lacus vitae</text><text x="540.0" y="441.0" font-size="4.7" font-style="italic" font-weight="normal" fill="#939596" textLength="76.0" lengthAdjust="spacingAndGlyphs" opacity="1">tristique nullam malesuada nulla ante massa</text><text x="540.0" y="447.9" font-size="4.7" font-style="italic" font-weight="normal" fill="#939596" textLength="39.6" lengthAdjust="spacingAndGlyphs" opacity="1">feugiat wisi amet ligula</text><circle cx="446.95" cy="314.15" r="1.35" fill="none" stroke="#2d4148" stroke-width="0.8"/><circle cx="450.45" cy="314.15" r="1.35" fill="none" stroke="#2d4148" stroke-width="0.8"/><circle cx="446.95" cy="317.65" r="1.35" fill="none" stroke="#2d4148" stroke-width="0.8"/><circle cx="450.45" cy="317.65" r="1.35" fill="none" stroke="#2d4148" stroke-width="0.8"/><rect x="714.0" y="312.4" width="47.1" height="6.9" rx="3.5" fill="#fafbfb" stroke="none" stroke-width="0.3"/><text x="737.5" y="316.9" font-size="3" font-weight="bold" font-family="'Liberation Sans',sans-serif" text-anchor="middle" textLength="29.6" lengthAdjust="spacing" fill="#98a2a4">HOME / ABOUT</text><text x="571.0" y="489.9" font-size="3.5" textLength="60.4" lengthAdjust="spacingAndGlyphs" fill="#cdd0d1" font-style="italic">© 2021 <tspan font-weight="bold" font-style="normal">Wonsnow.</tspan> All rights reserved</text></svg></section>
<section class="slide" style="left:822px;top:309px"><svg viewBox="822 309 329 185" preserveAspectRatio="none"><rect x="822.0" y="309.0" width="329.0" height="185.0" fill="#fff" /><path d="M869.0 312.0 C871.5 313.1 878.5 318.3 884.0 318.8 C889.5 319.3 897.2 316.0 902.0 315.0 C906.8 314.0 910.5 311.6 912.5 312.8 C914.5 314.1 914.0 319.4 914.0 322.5 C914.0 325.6 910.8 330.8 912.5 331.5 C914.2 332.2 919.5 329.4 924.5 327.0 C929.5 324.6 938.6 318.3 942.5 317.3 C946.4 316.3 947.5 317.4 947.8 321.0 C948.0 324.6 945.0 333.5 944.0 339.0 C943.0 344.5 941.5 349.8 941.8 354.0 C942.0 358.2 942.9 362.0 945.5 364.5 C948.1 367.0 951.8 368.0 957.5 369.0 C963.2 370.0 972.5 369.9 980.0 370.5 C987.5 371.1 996.6 371.6 1002.5 372.8 C1008.4 374.1 1013.2 377.1 1015.3 378.0" fill="none" stroke="#f2eee5" stroke-width="0.7" stroke-linecap="round"/><rect x="1039.1" y="309.0" width="111.9" height="124.0" fill="#08343e" /><clipPath id="c8"><rect x="821.6" y="349.9" width="62.4" height="120.0"/></clipPath><g clip-path="url(#c8)"><rect x="820.6" y="348.9" width="64.4" height="122.0" fill="#4a5048"/><g transform="translate(800 344) scale(0.16667)"><g filter="url(#z9)"><rect x="80" y="-10" width="480" height="600" fill="#4a5048"/><ellipse cx="180" cy="70" rx="90" ry="60" fill="#3a3f3a"/><rect x="440" y="200" width="120" height="360" fill="#565c54"/><rect x="80" y="580" width="480" height="230" fill="#55625a"/><rect x="80" y="588" width="480" height="24" fill="#69756b"/></g><g filter="url(#z4)"><polygon points="135,130 330,38 497,38 482,120 440,200 380,232 300,262 135,282" fill="#b8c7c1"/><polygon points="135,280 300,262 300,332 135,330" fill="#a3b3ac"/><polyline points="200,110 420,60" fill="none" stroke="#d5e0db" stroke-width="10" stroke-linecap="round" stroke-linejoin="round"/><polyline points="160,200 400,150" fill="none" stroke="#9db0a8" stroke-width="8" stroke-linecap="round" stroke-linejoin="round"/><polyline points="330,40 470,150" fill="none" stroke="#cfdbd6" stroke-width="8" stroke-linecap="round" stroke-linejoin="round"/></g><g filter="url(#z3)"><rect x="148" y="310" width="18" height="82" fill="#d8d5cc"/><polyline points="300,510 280,650" fill="none" stroke="#a7733d" stroke-width="9" stroke-linecap="round" stroke-linejoin="round"/><polyline points="310,520 318,742" fill="none" stroke="#a7733d" stroke-width="9" stroke-linecap="round" stroke-linejoin="round"/><polyline points="382,520 426,690" fill="none" stroke="#a7733d" stroke-width="9" stroke-linecap="round" stroke-linejoin="round"/><polyline points="230,540 300,640" fill="none" stroke="#292927" stroke-width="4" stroke-linecap="round" stroke-linejoin="round"/><polyline points="320,560 390,600" fill="none" stroke="#292927" stroke-width="4" stroke-linecap="round" stroke-linejoin="round"/><ellipse cx="340" cy="500" rx="72" ry="20" fill="#d8d9d5"/><ellipse cx="360" cy="140" rx="40" ry="34" fill="#b39876"/><ellipse cx="355" cy="186" rx="27" ry="34" fill="#d8b7a1" transform="rotate(-20 355 186)"/><polygon points="135,300 240,265 292,270 282,296 160,322" fill="#d1ab91"/><polygon points="135,400 260,375 322,420 332,472 250,502 160,542 135,522" fill="#a8c7c3"/><polygon points="290,270 400,215 466,240 480,330 440,452 380,502 300,492 310,400 260,380" fill="#e0e2df"/><polygon points="175,520 232,495 216,600 200,682 150,732 140,716 176,650 165,580" fill="#c8a48b"/></g></g></g><clipPath id="c9"><rect x="1016.0" y="374.5" width="93.9" height="119.2"/></clipPath><g clip-path="url(#c9)"><rect x="1015.0" y="373.5" width="95.9" height="121.2" fill="#c6c1ba"/><g transform="translate(990 366) scale(0.16667)"><g filter="url(#z9)"><rect x="100" y="0" width="680" height="830" fill="#c6c1ba"/><rect x="100" y="0" width="680" height="200" fill="#d3cec6"/><ellipse cx="340" cy="110" rx="70" ry="50" fill="#c8b799"/><ellipse cx="270" cy="200" rx="60" ry="40" fill="#6b6b71"/><ellipse cx="190" cy="190" rx="30" ry="30" fill="#8a8a8e"/><rect x="520" y="0" width="260" height="130" fill="#afa79d"/><rect x="540" y="120" width="82" height="202" fill="#b48989"/><rect x="620" y="130" width="160" height="242" fill="#c3543a"/><ellipse cx="660" cy="230" rx="30" ry="80" fill="#d8753a"/><rect x="100" y="620" width="192" height="210" fill="#cfccc7"/><polygon points="600,640 780,790 780,830 640,830" fill="#d8d6d2"/></g><g filter="url(#z3)"><polygon points="400,90 470,75 512,110 526,200 520,282 490,292 480,200 420,200 410,272 330,302 370,220 385,140" fill="#d8bb8b"/><ellipse cx="450" cy="186" rx="37" ry="51" fill="#dfbca4"/><polygon points="415,280 482,265 542,330 562,420 582,560 652,780 540,780 500,560 470,420 430,330" fill="#131315"/><polygon points="490,290 572,310 596,380 582,562 560,420 540,330" fill="#af9479"/><polygon points="330,300 410,275 470,420 490,520 520,640 532,780 290,780 285,620 300,580 250,560 225,520 250,400 290,330" fill="#b79b7f"/><polygon points="340,320 410,290 462,430 440,440" fill="#c5a98c"/><polyline points="300,580 420,560 440,500" fill="none" stroke="#9a8066" stroke-width="6" stroke-linecap="round" stroke-linejoin="round"/><ellipse cx="470" cy="466" rx="29" ry="37" fill="#dab69d"/></g></g></g><text x="1057.4" y="361.0" font-size="13.6" font-weight="bold" fill="#c8892e" textLength="51.8" lengthAdjust="spacingAndGlyphs">We Offer's</text><text x="902.6" y="394.6" font-size="5.1" font-style="normal" font-weight="bold" fill="#2a373c" textLength="27.4" lengthAdjust="spacingAndGlyphs" opacity="1">Description</text><text x="902.6" y="404.7" font-size="4.7" font-style="italic" font-weight="normal" fill="#939596" textLength="93.0" lengthAdjust="spacingAndGlyphs" opacity="1">suscipit eros nec metus auctor id dapibus quam</text><text x="902.6" y="411.9" font-size="4.7" font-style="italic" font-weight="normal" fill="#939596" textLength="96.9" lengthAdjust="spacingAndGlyphs" opacity="1">aliquam sed pretia viverra ornare praesent turpia</text><text x="902.6" y="419.1" font-size="4.7" font-style="italic" font-weight="normal" fill="#939596" textLength="60.4" lengthAdjust="spacingAndGlyphs" opacity="1">antes dolor elementum ipsum</text><text x="902.6" y="431.1" font-size="4.7" font-style="italic" font-weight="normal" fill="#939596" textLength="93.0" lengthAdjust="spacingAndGlyphs" opacity="1">suscipit eros nec metus auctor id dapibus quam</text><text x="902.6" y="438.3" font-size="4.7" font-style="italic" font-weight="normal" fill="#939596" textLength="96.9" lengthAdjust="spacingAndGlyphs" opacity="1">aliquam sed pretia viverra ornare praesent turpia</text><text x="902.6" y="445.5" font-size="4.7" font-style="italic" font-weight="normal" fill="#939596" textLength="95.4" lengthAdjust="spacingAndGlyphs" opacity="1">antes dolor elementum ipsum volutpa tincidunt</text><text x="902.6" y="452.7" font-size="4.7" font-style="italic" font-weight="normal" fill="#939596" textLength="66.9" lengthAdjust="spacingAndGlyphs" opacity="1">dapibus integer molla da vel magna</text><circle cx="829.95" cy="314.15" r="1.35" fill="none" stroke="#2d4148" stroke-width="0.8"/><circle cx="833.45" cy="314.15" r="1.35" fill="none" stroke="#2d4148" stroke-width="0.8"/><circle cx="829.95" cy="317.65" r="1.35" fill="none" stroke="#2d4148" stroke-width="0.8"/><circle cx="833.45" cy="317.65" r="1.35" fill="none" stroke="#2d4148" stroke-width="0.8"/><rect x="1097.0" y="312.4" width="47.1" height="6.9" rx="3.5" fill="#fafbfb" stroke="none" stroke-width="0.3"/><text x="1120.5" y="316.9" font-size="3" font-weight="bold" font-family="'Liberation Sans',sans-serif" text-anchor="middle" textLength="29.6" lengthAdjust="spacing" fill="#98a2a4">HOME / ABOUT</text><text x="954.3" y="490.0" font-size="3.5" textLength="60.4" lengthAdjust="spacingAndGlyphs" fill="#cdd0d1" font-style="italic">© 2021 <tspan font-weight="bold" font-style="normal">Wonsnow.</tspan> All rights reserved</text></svg></section>
<section class="slide" style="left:56px;top:544px"><svg viewBox="56 544 329 185" preserveAspectRatio="none"><rect x="56.0" y="544.0" width="329.0" height="185.0" fill="#08343e" /><rect x="56.0" y="544.0" width="44.2" height="58.0" fill="#fff" /><rect x="147.4" y="544.0" width="237.6" height="185.0" fill="#fff" /><clipPath id="c10"><rect x="100.0" y="544.1" width="109.8" height="159.0"/></clipPath><g clip-path="url(#c10)"><rect x="99.0" y="543.1" width="111.8" height="161.0" fill="#555556"/><g transform="translate(60 544) scale(0.20000)"><g filter="url(#z30)"><rect x="100" y="-100" width="760" height="1000" fill="#4b4b4d"/><ellipse cx="490" cy="320" rx="180" ry="240" fill="#575759"/><rect x="100" y="600" width="760" height="300" fill="#626264"/><ellipse cx="600" cy="740" rx="170" ry="70" fill="#6e6e70"/><ellipse cx="200" cy="20" rx="140" ry="140" fill="#3f3f41"/><ellipse cx="760" cy="40" rx="110" ry="180" fill="#434345"/></g><g filter="url(#z2)"><polyline points="452,480 452,762" fill="none" stroke="#c8c8c8" stroke-width="10" stroke-linecap="round" stroke-linejoin="round"/><polyline points="590,620 598,762" fill="none" stroke="#c8c8c8" stroke-width="10" stroke-linecap="round" stroke-linejoin="round"/><polyline points="452,530 560,520" fill="none" stroke="#bdbdbd" stroke-width="8" stroke-linecap="round" stroke-linejoin="round"/><polyline points="452,660 596,650" fill="none" stroke="#bdbdbd" stroke-width="8" stroke-linecap="round" stroke-linejoin="round"/><rect x="450" y="468" width="122" height="22" fill="#8a8a8a"/><ellipse cx="496" cy="176" rx="44" ry="54" fill="#291e1b"/><polygon points="520,200 548,240 540,270 510,250" fill="#291e1b"/><ellipse cx="490" cy="186" rx="24" ry="32" fill="#c89f87"/><polygon points="445,215 540,230 556,372 440,382" fill="#111111"/><polygon points="482,232 504,232 500,320 488,320" fill="#b48971"/><polygon points="440,370 560,365 622,460 616,612 545,602 560,470 520,420 526,600 520,732 465,736 455,600 445,470" fill="#0f0f0f"/><polygon points="345,420 390,260 440,210 470,225 455,300 440,370 420,460 390,512 370,500" fill="#c1a579"/><polygon points="530,240 560,260 586,350 590,402 555,380 545,300" fill="#b79b71"/><ellipse cx="482" cy="762" rx="30" ry="16" fill="#af896f"/><ellipse cx="560" cy="626" rx="20" ry="28" fill="#af896f"/></g></g></g><text x="249.1" y="614.6" font-size="13.6" font-weight="bold" fill="#1c2b31" textLength="50.8" lengthAdjust="spacingAndGlyphs">We Offer's</text><text x="249.1" y="627.8" font-size="5.1" font-style="normal" font-weight="bold" fill="#2a373c" textLength="27.2" lengthAdjust="spacingAndGlyphs" opacity="1">Description</text><text x="249.1" y="637.6" font-size="4.7" font-style="italic" font-weight="normal" fill="#939596" textLength="93.3" lengthAdjust="spacingAndGlyphs" opacity="1">Suscipit eros nec metus auctor id dapibus quam</text><text x="249.1" y="645.0" font-size="4.7" font-style="italic" font-weight="normal" fill="#939596" textLength="96.9" lengthAdjust="spacingAndGlyphs" opacity="1">aliquam sed pretia viverra ornare praesent turpia</text><text x="249.1" y="652.3" font-size="4.7" font-style="italic" font-weight="normal" fill="#939596" textLength="56.7" lengthAdjust="spacingAndGlyphs" opacity="1">antes dolor elementum ipsum</text><text x="249.1" y="663.4" font-size="4.7" font-style="italic" font-weight="normal" fill="#939596" textLength="93.3" lengthAdjust="spacingAndGlyphs" opacity="1">Suscipit eros nec metus auctor id dapibus quam</text><text x="249.1" y="670.9" font-size="4.7" font-style="italic" font-weight="normal" fill="#939596" textLength="96.9" lengthAdjust="spacingAndGlyphs" opacity="1">aliquam sed pretia viverra ornare praesent turpia</text><text x="249.1" y="678.4" font-size="4.7" font-style="italic" font-weight="normal" fill="#939596" textLength="90.3" lengthAdjust="spacingAndGlyphs" opacity="1">antes dolor elementum ipsum volutpa tincidunt</text><text x="249.1" y="685.9" font-size="4.7" font-style="italic" font-weight="normal" fill="#939596" textLength="66.3" lengthAdjust="spacingAndGlyphs" opacity="1">dapibus integer molla da vel magna</text><circle cx="63.75" cy="549.15" r="1.35" fill="none" stroke="#2d4148" stroke-width="0.8"/><circle cx="67.25" cy="549.15" r="1.35" fill="none" stroke="#2d4148" stroke-width="0.8"/><circle cx="63.75" cy="552.65" r="1.35" fill="none" stroke="#2d4148" stroke-width="0.8"/><circle cx="67.25" cy="552.65" r="1.35" fill="none" stroke="#2d4148" stroke-width="0.8"/><rect x="331.6" y="548.0" width="45.9" height="6.0" rx="3.0" fill="#eef0f0" stroke="none" stroke-width="0.3"/><text x="354.6" y="552.0" font-size="3" font-weight="bold" font-family="'Liberation Sans',sans-serif" text-anchor="middle" textLength="29.6" lengthAdjust="spacing" fill="#98a2a4">HOME / ABOUT</text><text x="187.7" y="725.5" font-size="3.5" textLength="60.4" lengthAdjust="spacingAndGlyphs" fill="#cdd0d1" font-style="italic">© 2021 <tspan font-weight="bold" font-style="normal">Wonsnow.</tspan> All rights reserved</text></svg></section>
<section class="slide" style="left:439px;top:544px"><svg viewBox="439 544 329 185" preserveAspectRatio="none"><rect x="439.0" y="544.0" width="329.0" height="185.0" fill="#fff" /><path d="M765.6 573.8 C763.0 575.0 755.1 579.0 750.0 581.3 C744.9 583.6 738.1 585.4 735.0 587.5 C731.9 589.6 731.3 591.1 731.3 593.8 C731.3 596.5 733.1 600.5 735.0 603.8 C736.9 607.1 740.8 611.2 742.5 613.8 C744.2 616.4 745.8 618.4 745.0 619.4 C744.2 620.4 741.4 620.2 737.5 620.0 C733.6 619.8 724.3 617.5 721.9 618.1 C719.5 618.7 722.3 621.7 723.1 623.8 C723.9 625.9 727.6 629.4 726.9 630.6 C726.2 631.9 721.4 631.2 718.8 631.3 C716.2 631.4 712.5 631.3 711.3 631.3" fill="none" stroke="#f2eee5" stroke-width="0.7" stroke-linecap="round"/><rect x="439.0" y="618.5" width="85.4" height="110.5" fill="#08343e" /><clipPath id="c11"><rect x="538.5" y="569.9" width="81.9" height="82.2"/></clipPath><g clip-path="url(#c11)"><rect x="537.5" y="568.9" width="83.9" height="84.2" fill="#1a1312"/><g transform="translate(525 562) scale(0.16667)"><g filter="url(#z6)"><rect x="40" y="10" width="570" height="570" fill="#1a1312"/><rect x="400" y="10" width="210" height="152" fill="#c8c199"/><ellipse cx="410" cy="185" rx="40" ry="25" fill="#a8d8c4"/><ellipse cx="160" cy="220" rx="50" ry="90" fill="#3a2320"/><rect x="480" y="250" width="100" height="300" fill="#1b1415"/><ellipse cx="545" cy="312" rx="25" ry="42" fill="#492923"/></g><g filter="url(#z3)"><ellipse cx="350" cy="92" rx="66" ry="40" fill="#140f11"/><ellipse cx="356" cy="142" rx="39" ry="47" fill="#c8a78b"/><polygon points="400,60 440,70 482,140 542,230 500,252 450,160" fill="#c8a488"/><polygon points="180,230 240,180 290,190 330,300 350,382 300,402 240,402 200,330" fill="#dee0ce"/><polygon points="400,190 460,170 560,240 566,272 500,282 470,302 440,422 380,402 390,300" fill="#e2e4d5"/><polygon points="320,200 400,200 400,400 340,400" fill="#e8e8e0"/><polygon points="275,190 330,215 380,300 392,382 350,382 320,290" fill="#141213"/><polygon points="345,215 392,240 392,300 370,290" fill="#19171a"/><polygon points="250,400 400,410 482,440 532,470 522,550 235,550 230,470" fill="#d4ded2"/><polyline points="320,345 326,550" fill="none" stroke="#19191b" stroke-width="18" stroke-linecap="round" stroke-linejoin="round"/><polyline points="292,352 342,338" fill="none" stroke="#565656" stroke-width="12" stroke-linecap="round" stroke-linejoin="round"/></g></g></g><clipPath id="c12"><rect x="626.4" y="569.9" width="82.2" height="82.2"/></clipPath><g clip-path="url(#c12)"><rect x="625.4" y="568.9" width="84.2" height="84.2" fill="#bcb9b7"/><g transform="translate(525 562) scale(0.16667)"><g filter="url(#z6)"><rect x="570" y="10" width="570" height="570" fill="#bcb9b7"/><polygon points="570,10 700,10 650,120 570,200" fill="#1e231f"/><rect x="1040" y="10" width="100" height="570" fill="#323232"/><rect x="960" y="10" width="80" height="570" fill="#b4b2af"/><rect x="570" y="400" width="130" height="180" fill="#898785"/></g><g filter="url(#z3)"><polygon points="890,80 960,70 1002,130 1032,250 1042,350 1002,402 980,300 940,240 900,230 860,200 780,200 770,185 850,170 890,130" fill="#493327"/><ellipse cx="945" cy="142" rx="34" ry="44" fill="#c8a38b"/><rect x="908" y="108" width="74" height="16" fill="#79594f"/><polygon points="900,300 972,270 1002,330 992,442 900,422" fill="#cec7d5"/><polygon points="820,440 992,440 982,550 800,550" fill="#a77961"/><ellipse cx="882" cy="472" rx="44" ry="48" fill="#c3997f"/><rect x="780" y="480" width="72" height="70" fill="#b4b6bd"/><polygon points="660,300 740,240 850,220 932,250 952,300 900,342 880,422 830,452 780,400 740,432 720,550 690,550 700,430 670,380" fill="#899fac"/><polygon points="700,420 800,400 800,550 700,550" fill="#3e5462"/><polyline points="700,330 820,300 880,340" fill="none" stroke="#5a7080" stroke-width="10" stroke-linecap="round" stroke-linejoin="round"/><polyline points="760,260 840,300" fill="none" stroke="#a5b8c4" stroke-width="10" stroke-linecap="round" stroke-linejoin="round"/></g></g></g><text x="457.2" y="603.5" font-size="13.6" font-weight="bold" fill="#1c2b31" textLength="52.3" lengthAdjust="spacingAndGlyphs">Our Vision</text><text x="537.5" y="674.2" font-size="25" font-weight="bold" fill="#d0d3d4">“</text><text x="538.5" y="674.1" font-size="4.8" font-style="normal" font-weight="bold" fill="#3a464a" textLength="138.0" lengthAdjust="spacingAndGlyphs" opacity="1">Success seems to be connected with action. Successful people keep</text><text x="538.5" y="679.5" font-size="4.8" font-style="normal" font-weight="bold" fill="#3a464a" textLength="99.1" lengthAdjust="spacingAndGlyphs" opacity="1">moving. They make mistakes but they don't quit</text><text x="538.5" y="693.2" font-size="4.7" font-style="italic" font-weight="normal" fill="#939596" textLength="203.1" lengthAdjust="spacingAndGlyphs" opacity="1">Suscipit eros nec metus auctor id dapibus quam aliquam sed pretia viverra ornare praesent turpia antes</text><text x="538.5" y="700.4" font-size="4.7" font-style="italic" font-weight="normal" fill="#939596" textLength="183.9" lengthAdjust="spacingAndGlyphs" opacity="1">dolor elementum ipsum volutpa tincidunt dapibus integer molla da vel magna hendrerit eleifend</text><circle cx="446.95" cy="549.15" r="1.35" fill="none" stroke="#2d4148" stroke-width="0.8"/><circle cx="450.45" cy="549.15" r="1.35" fill="none" stroke="#2d4148" stroke-width="0.8"/><circle cx="446.95" cy="552.65" r="1.35" fill="none" stroke="#2d4148" stroke-width="0.8"/><circle cx="450.45" cy="552.65" r="1.35" fill="none" stroke="#2d4148" stroke-width="0.8"/><rect x="714.6" y="548.0" width="45.9" height="6.0" rx="3.0" fill="#eef0f0" stroke="none" stroke-width="0.3"/><text x="737.5" y="552.0" font-size="3" font-weight="bold" font-family="'Liberation Sans',sans-serif" text-anchor="middle" textLength="29.6" lengthAdjust="spacing" fill="#98a2a4">HOME / ABOUT</text><text x="571.0" y="725.5" font-size="3.5" textLength="60.4" lengthAdjust="spacingAndGlyphs" fill="#cdd0d1" font-style="italic">© 2021 <tspan font-weight="bold" font-style="normal">Wonsnow.</tspan> All rights reserved</text></svg></section>
<section class="slide" style="left:822px;top:544px"><svg viewBox="822 544 329 185" preserveAspectRatio="none"><rect x="822.0" y="544.0" width="329.0" height="185.0" fill="#fff" /><path d="M824.5 578.5 C825.8 578.2 828.6 578.5 832.0 577.0 C835.4 575.5 841.3 571.4 845.0 569.5 C848.7 567.6 851.3 566.2 854.0 565.5 C856.7 564.8 859.1 564.2 861.0 565.0 C862.9 565.8 864.3 567.2 865.5 570.0 C866.7 572.8 867.1 578.3 868.0 582.0 C868.9 585.7 869.9 590.8 871.0 592.0 C872.1 593.2 873.0 591.3 874.5 589.0 C876.0 586.7 878.6 580.5 880.0 578.0 C881.4 575.5 882.0 573.8 883.0 574.0 C884.0 574.2 885.0 576.9 886.0 579.0 C887.0 581.1 887.8 586.0 889.0 586.5 C890.2 587.0 891.5 583.9 893.0 582.0 C894.5 580.1 896.3 576.6 898.0 575.0 C899.7 573.4 901.2 572.8 903.0 572.5 C904.8 572.2 907.1 572.5 909.0 573.0 C910.9 573.5 913.6 575.1 914.5 575.5" fill="none" stroke="#f2eee5" stroke-width="0.7" stroke-linecap="round"/><path d="M960.0 720.3 C961.5 719.7 965.4 717.3 969.3 716.8 C973.2 716.3 978.0 716.5 983.3 717.3 C988.5 718.1 995.3 720.2 1000.8 721.4 C1006.2 722.6 1011.1 723.8 1016.0 724.3 C1020.9 724.8 1026.5 725.1 1030.0 724.3 C1033.5 723.5 1035.0 722.0 1037.0 719.7 C1039.0 717.4 1040.2 713.4 1041.7 710.3 C1043.2 707.2 1044.4 703.2 1046.3 701.0 C1048.2 698.8 1050.2 697.7 1053.3 696.9 C1056.4 696.1 1060.9 696.1 1065.0 696.3 C1069.1 696.5 1075.7 697.8 1077.8 698.1" fill="none" stroke="#f2eee5" stroke-width="0.7" stroke-linecap="round"/><rect x="822.0" y="704.0" width="68.0" height="25.0" fill="#c47e26" /><clipPath id="c13"><rect x="1016.3" y="563.0" width="57.3" height="119.4"/></clipPath><g clip-path="url(#c13)"><rect x="1015.3" y="562.0" width="59.3" height="121.4" fill="#a99b8d"/><g transform="translate(1000 560) scale(0.16667)"><g filter="url(#z3)"><rect x="90" y="10" width="360" height="350" fill="#a99b8d"/><rect x="90" y="10" width="360" height="72" fill="#8a7c70"/><rect x="250" y="60" width="82" height="292" fill="#a49689"/><rect x="90" y="295" width="360" height="63" fill="#b4aba1"/><polygon points="97,352 97,170 120,110 170,82 220,110 250,170 250,352" fill="#b5a696"/><polygon points="104,352 104,180 125,125 170,100 215,125 240,180 240,352" fill="#3a221a"/><rect x="104" y="232" width="136" height="120" fill="#894026"/><rect x="340" y="10" width="42" height="106" fill="#393d43"/><rect x="400" y="10" width="42" height="106" fill="#393d43"/><polygon points="340,296 340,225 362,192 385,225 385,296" fill="#494d53"/><polygon points="400,296 400,225 420,192 442,225 442,296" fill="#494d53"/><rect x="90" y="355" width="360" height="390" fill="#d8d5cf"/></g><g filter="url(#z2)"><ellipse cx="290" cy="176" rx="19" ry="24" fill="#c89f87"/><polygon points="250,195 300,200 316,290 310,382 260,402 215,396 235,290" fill="#131315"/><polygon points="225,395 270,400 215,480 180,540 150,532 185,470" fill="#14171b"/><polygon points="290,400 320,440 350,510 392,520 350,546 320,520 300,460" fill="#14171b"/><rect x="238" y="388" width="91" height="68" fill="#291917"/></g></g></g><rect x="1016.3" y="637.0" width="57.3" height="45.4" fill="#0f434e" opacity="0.86"/><g fill="none" stroke="#c2913a" stroke-width="0.95" stroke-linejoin="round"><circle cx="1043.05" cy="654.90" r="3.3"/><circle cx="1046.85" cy="654.90" r="3.3"/><path d="M1041.55 650.40 l1.2 -2 l2.2 1.6 l2.2 -1.6 l1.2 2"/></g><text x="1044.9" y="668.6" font-size="6" font-weight="bold" fill="#fff" text-anchor="middle" textLength="28" lengthAdjust="spacingAndGlyphs">Section Two</text><clipPath id="c14"><rect x="1078.4" y="577.1" width="72.7" height="132.0"/></clipPath><g clip-path="url(#c14)"><rect x="1077.4" y="576.1" width="74.7" height="134.0" fill="#a5a6a8"/><g transform="translate(1000 560) scale(0.16667)"><g filter="url(#z6)"><rect x="430" y="60" width="520" height="330" fill="#dee5e9"/><ellipse cx="860" cy="130" rx="120" ry="60" fill="#c6d4dd"/><ellipse cx="520" cy="300" rx="80" ry="80" fill="#eef2f3"/><rect x="430" y="515" width="520" height="425" fill="#868b91"/><ellipse cx="690" cy="620" rx="190" ry="70" fill="#a6abb1"/><rect x="430" y="790" width="520" height="150" fill="#4f5358"/><ellipse cx="690" cy="800" rx="120" ry="30" fill="#5d6166"/><ellipse cx="500" cy="720" rx="60" ry="60" fill="#6e7379"/></g><g filter="url(#z2)"><rect x="460" y="410" width="455" height="107" fill="#d1cabc"/><polygon points="460,385 915,385 915,411 460,411" fill="#995947"/><rect x="485" y="430" width="9" height="16" fill="#6b6660"/><rect x="485" y="470" width="9" height="18" fill="#6b6660"/><rect x="519" y="430" width="9" height="16" fill="#6b6660"/><rect x="519" y="470" width="9" height="18" fill="#6b6660"/><rect x="553" y="430" width="9" height="16" fill="#6b6660"/><rect x="553" y="470" width="9" height="18" fill="#6b6660"/><rect x="587" y="430" width="9" height="16" fill="#6b6660"/><rect x="587" y="470" width="9" height="18" fill="#6b6660"/><rect x="621" y="430" width="9" height="16" fill="#6b6660"/><rect x="621" y="470" width="9" height="18" fill="#6b6660"/><rect x="655" y="430" width="9" height="16" fill="#6b6660"/><rect x="655" y="470" width="9" height="18" fill="#6b6660"/><rect x="689" y="430" width="9" height="16" fill="#6b6660"/><rect x="689" y="470" width="9" height="18" fill="#6b6660"/><rect x="723" y="430" width="9" height="16" fill="#6b6660"/><rect x="723" y="470" width="9" height="18" fill="#6b6660"/><rect x="757" y="430" width="9" height="16" fill="#6b6660"/><rect x="757" y="470" width="9" height="18" fill="#6b6660"/><rect x="791" y="430" width="9" height="16" fill="#6b6660"/><rect x="791" y="470" width="9" height="18" fill="#6b6660"/><rect x="825" y="430" width="9" height="16" fill="#6b6660"/><rect x="825" y="470" width="9" height="18" fill="#6b6660"/><rect x="859" y="430" width="9" height="16" fill="#6b6660"/><rect x="859" y="470" width="9" height="18" fill="#6b6660"/><rect x="893" y="430" width="9" height="16" fill="#6b6660"/><rect x="893" y="470" width="9" height="18" fill="#6b6660"/><rect x="555" y="295" width="86" height="107" fill="#d4cfc3"/><polygon points="585,215 612,215 626,270 641,296 555,296 572,270" fill="#394147"/><polyline points="598,215 598,178" fill="none" stroke="#555d63" stroke-width="3" stroke-linecap="round" stroke-linejoin="round"/><ellipse cx="598" cy="335" rx="13" ry="13" fill="#a9a499"/></g><g filter="url(#z2)"><ellipse cx="596" cy="505" rx="16" ry="42" fill="#c8af89"/><ellipse cx="581" cy="447" rx="17" ry="9" fill="#1a1a1c"/><ellipse cx="578" cy="466" rx="12" ry="14" fill="#cfa98f"/><polygon points="525,532 562,499 615,495 624,585 608,617 540,602" fill="#161719"/><polygon points="540,592 622,600 602,675 588,780 570,804 560,720 534,790 516,780 521,690" fill="#121315"/><polygon points="655,420 692,418 704,470 680,482 652,470" fill="#59402f"/><ellipse cx="675" cy="432" rx="13" ry="15" fill="#c8a389"/><polygon points="607,474 640,480 720,457 748,462 714,510 703,577 700,752 645,760 649,577 640,510" fill="#131416"/><ellipse cx="622" cy="800" rx="30" ry="10" fill="#e6e6e6"/><ellipse cx="672" cy="782" rx="26" ry="9" fill="#e2e2e2"/><polygon points="786,428 812,436 838,520 826,566 800,500" fill="#a78359"/><ellipse cx="780" cy="443" rx="13" ry="15" fill="#cfa98f"/><polygon points="735,480 812,487 846,556 842,617 810,578 750,571" fill="#161719"/><polygon points="757,581 822,577 830,660 802,676 769,646" fill="#894f2f"/><polyline points="790,668 811,752 782,796" fill="none" stroke="#19191b" stroke-width="16" stroke-linecap="round" stroke-linejoin="round"/><polyline points="818,676 842,796" fill="none" stroke="#19191b" stroke-width="14" stroke-linecap="round" stroke-linejoin="round"/></g></g></g><text x="846.5" y="620.0" font-size="13.6" font-weight="bold" fill="#1c2b31" textLength="76.5" lengthAdjust="spacingAndGlyphs">Meet Our Team</text><text x="845.9" y="637.6" font-size="4.7" font-style="italic" font-weight="normal" fill="#939596" textLength="135.6" lengthAdjust="spacingAndGlyphs" opacity="1">Suscipit eros nec metus auctor id dapibus quam aliquam sed pretia</text><text x="845.9" y="645.1" font-size="4.7" font-style="italic" font-weight="normal" fill="#939596" textLength="131.1" lengthAdjust="spacingAndGlyphs" opacity="1">viverra ornare praesent turpia antes dolor elementum ipsum volutpa</text><text x="845.9" y="652.6" font-size="4.7" font-style="italic" font-weight="normal" fill="#939596" textLength="105.1" lengthAdjust="spacingAndGlyphs" opacity="1">tincidunt dapibus integer molla da vel magna hendrerit</text><circle cx="829.95" cy="549.15" r="1.35" fill="none" stroke="#2d4148" stroke-width="0.8"/><circle cx="833.45" cy="549.15" r="1.35" fill="none" stroke="#2d4148" stroke-width="0.8"/><circle cx="829.95" cy="552.65" r="1.35" fill="none" stroke="#2d4148" stroke-width="0.8"/><circle cx="833.45" cy="552.65" r="1.35" fill="none" stroke="#2d4148" stroke-width="0.8"/><rect x="1097.6" y="548.0" width="45.9" height="6.0" rx="3.0" fill="#eef0f0" stroke="none" stroke-width="0.3"/><text x="1120.5" y="552.0" font-size="3" font-weight="bold" font-family="'Liberation Sans',sans-serif" text-anchor="middle" textLength="29.6" lengthAdjust="spacing" fill="#98a2a4">HOME / ABOUT</text><text x="954.3" y="725.5" font-size="3.5" textLength="60.4" lengthAdjust="spacingAndGlyphs" fill="#cdd0d1" font-style="italic">© 2021 <tspan font-weight="bold" font-style="normal">Wonsnow.</tspan> All rights reserved</text></svg></section>
</body></html>
